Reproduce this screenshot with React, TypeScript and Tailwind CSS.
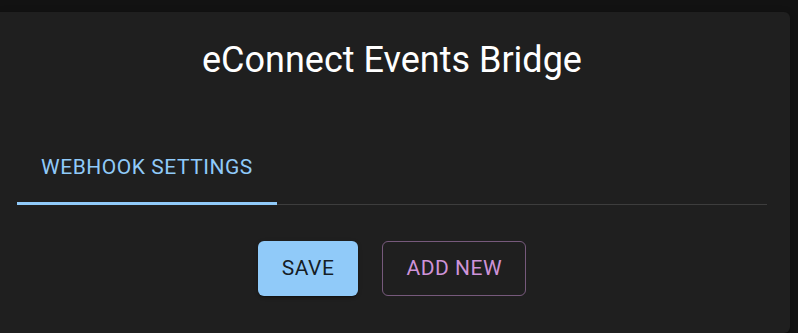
export default function App() {
	return (
		<div
			className="min-h-screen bg-[#121212] pt-[12px] text-white"
			style={{ fontFamily: "Roboto, 'Liberation Sans', sans-serif" }}
		>
			<div className="w-[790px] min-h-[321px] rounded-r-[6px] bg-[#1f1f1f] pl-[17px] pr-[23px] pt-[24px] shadow-[0_3px_3px_-2px_rgba(0,0,0,0.2),0_3px_4px_0_rgba(0,0,0,0.14),0_1px_8px_0_rgba(0,0,0,0.12)]">
				<h1 className="text-center text-[36px] font-normal leading-[48px]">eConnect Events Bridge</h1>

				<div className="mt-[48px] border-b border-[#3d3d3d]">
					<div className="flex">
						<button className="relative h-[72px] px-[24px] text-[21px] font-normal uppercase tracking-[0.54px] text-[#90caf9]">
							Webhook Settings
							<span className="absolute bottom-[-1px] left-0 right-0 h-[3px] bg-[#90caf9]" />
						</button>
					</div>
				</div>

				<div className="mt-[36px] flex justify-center gap-[24px]">
					<button className="h-[55px] rounded-[6px] bg-[#90caf9] px-[24px] text-[21px] font-normal uppercase tracking-[0.54px] text-[rgba(0,0,0,0.87)] shadow-[0_3px_1px_-2px_rgba(0,0,0,0.2),0_2px_2px_0_rgba(0,0,0,0.14),0_1px_5px_0_rgba(0,0,0,0.12)]">
						Save
					</button>
					<button className="h-[55px] rounded-[6px] border border-[rgba(206,147,216,0.5)] px-[23px] text-[21px] font-normal uppercase tracking-[0.54px] text-[#ce93d8]">
						Add New
					</button>
				</div>
			</div>
		</div>
	);
}
